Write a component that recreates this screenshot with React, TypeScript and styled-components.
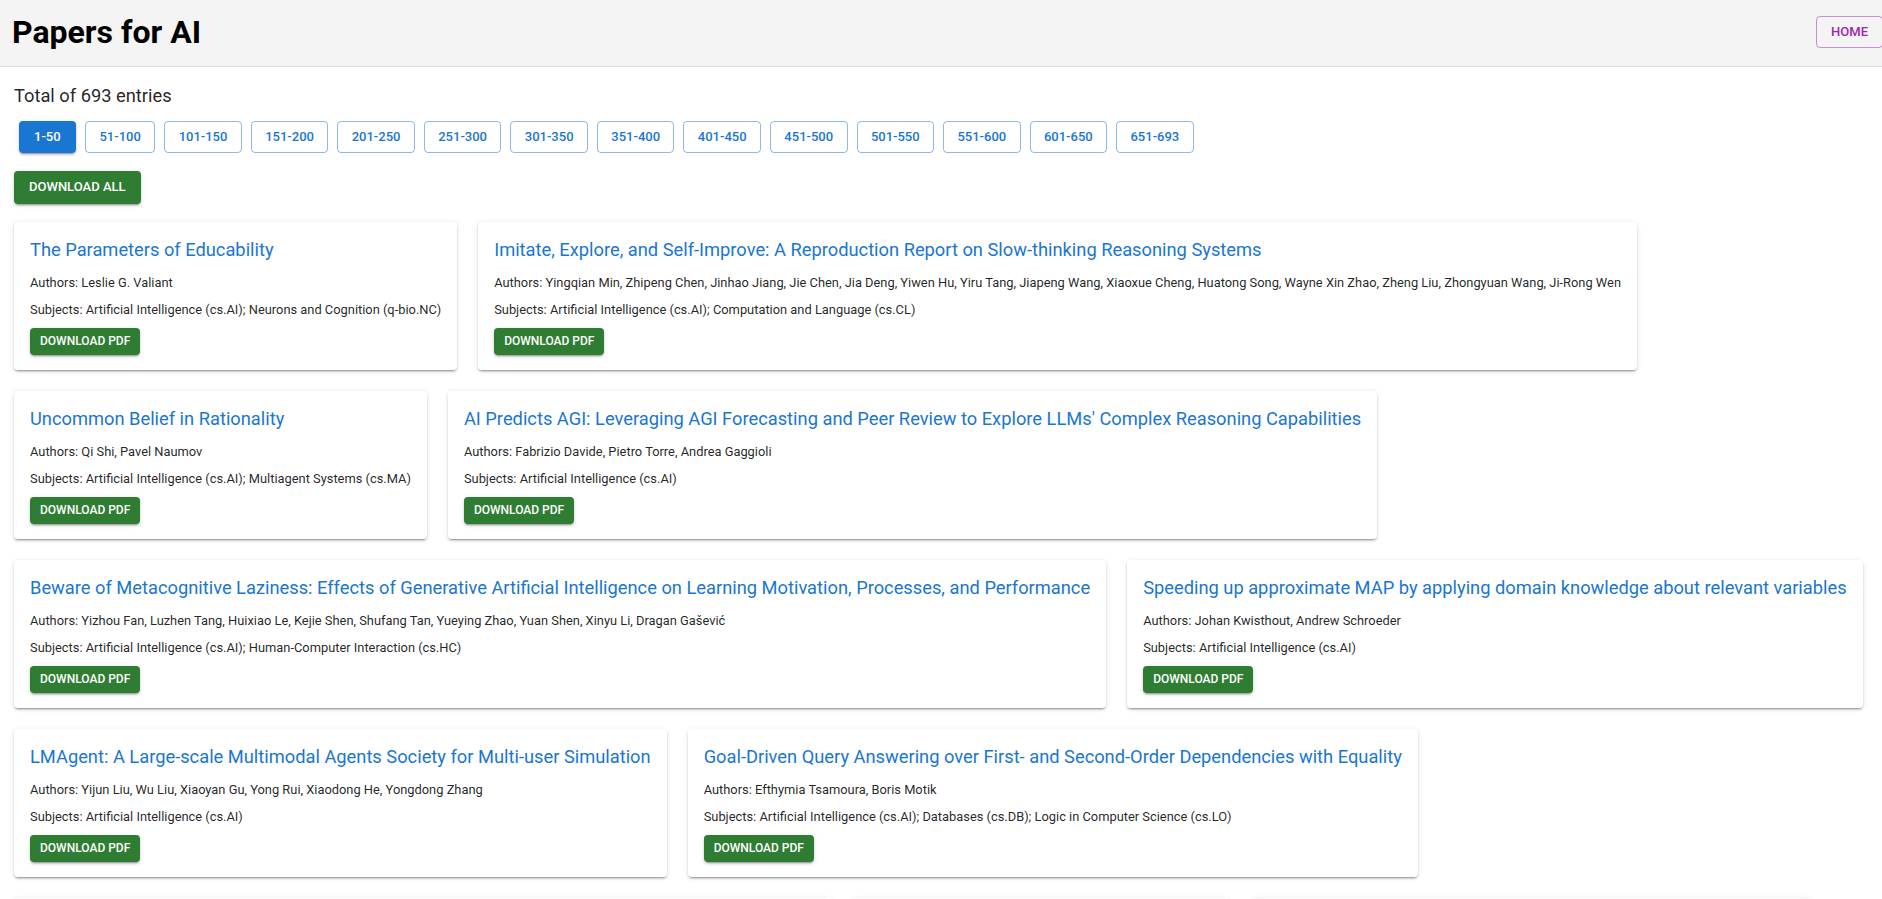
import React from "react";
import styled, { createGlobalStyle } from "styled-components";

const GlobalStyle = createGlobalStyle`
  * { box-sizing: border-box; }
  html, body {
    margin: 0;
    padding: 0;
    overflow: hidden;
    background: #ffffff;
  }
  body {
    font-family: Roboto, "Liberation Sans", Arial, sans-serif;
    color: rgba(0, 0, 0, 0.87);
  }
`;

const Header = styled.header`
  display: flex;
  align-items: center;
  justify-content: space-between;
  height: 67px;
  padding: 0 0 2px 12px;
  background: #f4f4f4;
  border-bottom: 1px solid #dcdcdc;
`;

const SiteTitle = styled.h1`
  margin: 0;
  font-size: 32px;
  line-height: 38px;
  font-weight: 700;
  color: #000000;
`;

const NavButton = styled.button`
  margin-right: -1px;
  padding: 4px 14px;
  font-family: Roboto, "Liberation Sans", Arial, sans-serif;
  font-size: 13px;
  font-weight: 500;
  line-height: 22.75px;
  text-transform: uppercase;
  color: #9c27b0;
  background: transparent;
  border: 1px solid rgba(156, 39, 176, 0.5);
  border-radius: 4px;
  cursor: pointer;
`;

const Main = styled.main`
  display: flex;
  flex-direction: column;
  align-items: flex-start;
  padding: 14px 14px;
`;

const Total = styled.p`
  margin: 1px 0 7px;
  font-size: 18.3px;
  line-height: 27px;
  white-space: nowrap;
`;

const PageBar = styled.nav`
  display: flex;
  flex-wrap: wrap;
  align-self: stretch;
`;

const PageButton = styled.button<{ $active?: boolean }>`
  margin: 4.5px;
  padding: ${(p) => (p.$active ? "5px 15.5px" : "4px 13.4px")};
  font-family: Roboto, "Liberation Sans", Arial, sans-serif;
  font-size: 13px;
  font-weight: 500;
  line-height: 22.75px;
  border-radius: 4px;
  cursor: pointer;
  color: ${(p) => (p.$active ? "#ffffff" : "#1976d2")};
  background: ${(p) => (p.$active ? "#1976d2" : "transparent")};
  border: ${(p) => (p.$active ? "none" : "1px solid rgba(25, 118, 210, 0.5)")};
  box-shadow: ${(p) =>
    p.$active
      ? "0px 3px 1px -2px rgba(0,0,0,0.2), 0px 2px 2px 0px rgba(0,0,0,0.14), 0px 1px 5px 0px rgba(0,0,0,0.12)"
      : "none"};
`;

const DownloadAll = styled.button`
  margin-top: 13px;
  padding: 5px 15px;
  font-family: Roboto, "Liberation Sans", Arial, sans-serif;
  font-size: 13px;
  font-weight: 500;
  line-height: 22.75px;
  text-transform: uppercase;
  color: #ffffff;
  background: #2e7d32;
  border: none;
  border-radius: 4px;
  cursor: pointer;
  box-shadow: 0px 3px 1px -2px rgba(0,0,0,0.2), 0px 2px 2px 0px rgba(0,0,0,0.14), 0px 1px 5px 0px rgba(0,0,0,0.12);
`;

const CardGrid = styled.section`
  display: flex;
  flex-wrap: wrap;
  align-items: flex-start;
  align-self: stretch;
  gap: 21px;
  margin-top: 18px;
`;

const Card = styled.article`
  flex: 0 0 auto;
  padding: 16px 16px 15px;
  background: #ffffff;
  border-radius: 4px;
  box-shadow: 0px 3px 1px -2px rgba(0,0,0,0.2), 0px 2px 2px 0px rgba(0,0,0,0.14), 0px 1px 5px 0px rgba(0,0,0,0.12);
`;

const CardTitle = styled.h2`
  margin: 0 0 11px;
  font-size: 18.3px;
  line-height: 24px;
  font-weight: 400;
  color: #1976d2;
  white-space: nowrap;
`;

const Meta = styled.p`
  margin: 0 0 7px;
  font-size: 12.87px;
  line-height: 20px;
  white-space: nowrap;
`;

const PdfButton = styled.button`
  margin-top: 1px;
  padding: 3px 10px;
  font-family: Roboto, "Liberation Sans", Arial, sans-serif;
  font-size: 12px;
  font-weight: 500;
  line-height: 21px;
  text-transform: uppercase;
  color: #ffffff;
  background: #2e7d32;
  border: none;
  border-radius: 4px;
  cursor: pointer;
  box-shadow: 0px 3px 1px -2px rgba(0,0,0,0.2), 0px 2px 2px 0px rgba(0,0,0,0.14), 0px 1px 5px 0px rgba(0,0,0,0.12);
`;

type Paper = { title: string; authors: string; subjects: string };

const papers: Paper[] = [
  {
    title: "The Parameters of Educability",
    authors: "Leslie G. Valiant",
    subjects: "Artificial Intelligence (cs.AI); Neurons and Cognition (q-bio.NC)",
  },
  {
    title:
      "Imitate, Explore, and Self-Improve: A Reproduction Report on Slow-thinking Reasoning Systems",
    authors:
      "Yingqian Min, Zhipeng Chen, Jinhao Jiang, Jie Chen, Jia Deng, Yiwen Hu, Yiru Tang, Jiapeng Wang, Xiaoxue Cheng, Huatong Song, Wayne Xin Zhao, Zheng Liu, Zhongyuan Wang, Ji-Rong Wen",
    subjects: "Artificial Intelligence (cs.AI); Computation and Language (cs.CL)",
  },
  {
    title: "Uncommon Belief in Rationality",
    authors: "Qi Shi, Pavel Naumov",
    subjects: "Artificial Intelligence (cs.AI); Multiagent Systems (cs.MA)",
  },
  {
    title:
      "AI Predicts AGI: Leveraging AGI Forecasting and Peer Review to Explore LLMs' Complex Reasoning Capabilities",
    authors: "Fabrizio Davide, Pietro Torre, Andrea Gaggioli",
    subjects: "Artificial Intelligence (cs.AI)",
  },
  {
    title:
      "Beware of Metacognitive Laziness: Effects of Generative Artificial Intelligence on Learning Motivation, Processes, and Performance",
    authors:
      "Yizhou Fan, Luzhen Tang, Huixiao Le, Kejie Shen, Shufang Tan, Yueying Zhao, Yuan Shen, Xinyu Li, Dragan Gašević",
    subjects: "Artificial Intelligence (cs.AI); Human-Computer Interaction (cs.HC)",
  },
  {
    title:
      "Speeding up approximate MAP by applying domain knowledge about relevant variables",
    authors: "Johan Kwisthout, Andrew Schroeder",
    subjects: "Artificial Intelligence (cs.AI)",
  },
  {
    title: "LMAgent: A Large-scale Multimodal Agents Society for Multi-user Simulation",
    authors: "Yijun Liu, Wu Liu, Xiaoyan Gu, Yong Rui, Xiaodong He, Yongdong Zhang",
    subjects: "Artificial Intelligence (cs.AI)",
  },
  {
    title:
      "Goal-Driven Query Answering over First- and Second-Order Dependencies with Equality",
    authors: "Efthymia Tsamoura, Boris Motik",
    subjects:
      "Artificial Intelligence (cs.AI); Databases (cs.DB); Logic in Computer Science (cs.LO)",
  },
  {
    title:
      "Rethinking Reward Models for Language Agents: Calibration, Robustness, and Fair Generalization",
    authors: "Mei Lin, Daniel Ortega, Sunil Rao",
    subjects: "Artificial Intelligence (cs.AI)",
  },
  {
    title: "Causal Abstraction for Trustworthy Agents",
    authors: "Anna Berg, Tomas Klein",
    subjects: "Artificial Intelligence (cs.AI)",
  },
  {
    title: "Planning with Language Models through Iterative Self-Refinement",
    authors: "Hao Zhang, Lucia Moretti, Kenji Sato",
    subjects: "Artificial Intelligence (cs.AI)",
  },
];

const ranges = [
  "1-50",
  "51-100",
  "101-150",
  "151-200",
  "201-250",
  "251-300",
  "301-350",
  "351-400",
  "401-450",
  "451-500",
  "501-550",
  "551-600",
  "601-650",
  "651-693",
];

export default function App() {
  return (
    <>
      <GlobalStyle />
      <Header>
        <SiteTitle>Papers for AI</SiteTitle>
        <NavButton>Home</NavButton>
      </Header>
      <Main>
        <Total>Total of 693 entries</Total>
        <PageBar>
          {ranges.map((r, i) => (
            <PageButton key={r} $active={i === 0}>
              {r}
            </PageButton>
          ))}
        </PageBar>
        <DownloadAll>Download All</DownloadAll>
        <CardGrid>
          {papers.map((p) => (
            <Card key={p.title}>
              <CardTitle>{p.title}</CardTitle>
              <Meta>Authors: {p.authors}</Meta>
              <Meta>Subjects: {p.subjects}</Meta>
              <PdfButton>Download PDF</PdfButton>
            </Card>
          ))}
        </CardGrid>
      </Main>
    </>
  );
}
